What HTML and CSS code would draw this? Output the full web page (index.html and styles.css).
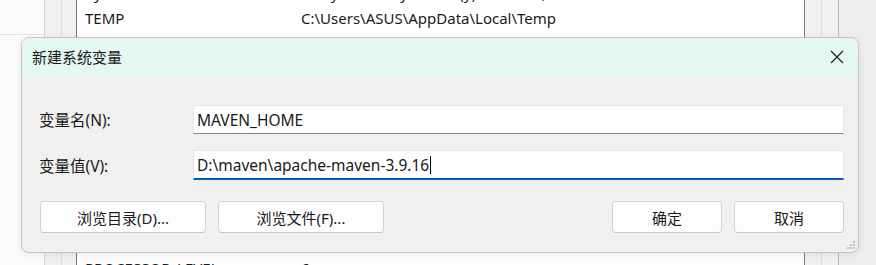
FILE: index.html
```html
<!DOCTYPE html>
<html lang="zh-CN">

<head>
    <meta charset="UTF-8">
    <title>新建系统变量</title>
    <link rel="stylesheet" href="styles.css">
</head>

<body>

    <!-- 背景: 环境变量窗口 -->
    <div class="desk">
        <div class="side">
            <div class="side-top"></div>
        </div>
        <div class="gutter"></div>
        <div class="gutter gutter-b"></div>
        <div class="list">
            <div class="row first"><span class="name">PyCharm</span><span class="value">D:\PyCharm\PyCharm (y) 2023\bin;</span></div>
            <div class="row"><span class="name">TEMP</span><span class="value">C:\Users\ASUS\AppData\Local\Temp</span></div>
            <div class="row"><span class="name">TMP</span><span class="value">C:\Users\ASUS\AppData\Local\Temp</span></div>
            <div class="row"><span class="name"></span><span class="value"></span></div>
            <div class="row"><span class="name"></span><span class="value"></span></div>
            <div class="row"><span class="name"></span><span class="value"></span></div>
            <div class="row"><span class="name"></span><span class="value"></span></div>
            <div class="row"><span class="name"></span><span class="value"></span></div>
            <div class="row"><span class="name"></span><span class="value"></span></div>
            <div class="row"><span class="name"></span><span class="value"></span></div>
            <div class="row"><span class="name">NUMBER_OF_PROCESSORS</span><span class="value">12</span></div>
            <div class="row"><span class="name">PROCESSOR_LEVEL</span><span class="value">6</span></div>
        </div>
        <div class="rail"></div>
        <div class="rail rail-b"></div>
        <div class="rail-end"></div>
    </div>

    <!-- 对话框 -->
    <div class="dialog">
        <div class="titlebar">
            <span class="title">新建系统变量</span>
            <svg class="close" width="14" height="14" viewBox="0 0 14 14">
                <path d="M1 1 L13 13 M13 1 L1 13" stroke="#1a1a1a" stroke-width="1.1" fill="none" />
            </svg>
        </div>

        <div class="body">
            <div class="fields">
                <label for="var-name">变量名(N):</label>
                <div class="input"><span id="var-name">MAVEN_HOME</span></div>

                <label for="var-value">变量值(V):</label>
                <div class="input focused"><span id="var-value">D:\maven\apache-maven-3.9.16</span><span class="caret"></span></div>
            </div>

            <div class="buttons">
                <button>浏览目录(D)...</button>
                <button>浏览文件(F)...</button>
                <div class="spacer"></div>
                <button class="small">确定</button>
                <button class="small">取消</button>
            </div>
        </div>

        <svg class="grip" width="9" height="9" viewBox="0 0 9 9">
            <rect x="7" y="1" width="2" height="2" fill="#c2c2c2" />
            <rect x="4" y="4" width="2" height="2" fill="#c2c2c2" />
            <rect x="7" y="4" width="2" height="2" fill="#c2c2c2" />
            <rect x="1" y="7" width="2" height="2" fill="#c2c2c2" />
            <rect x="4" y="7" width="2" height="2" fill="#c2c2c2" />
            <rect x="7" y="7" width="2" height="2" fill="#c2c2c2" />
        </svg>
    </div>

</body>

</html>
```

FILE: styles.css
```css
body {
    margin: 0;
    width: 876px;
    height: 265px;
    overflow: hidden;
    position: relative;
    font-family: "Noto Sans", "Noto Sans CJK SC", sans-serif;
    font-size: 15px;
    color: #1a1a1a;
    background-color: #f0f0f0;
}

/* 背景窗口 */
.desk {
    display: flex;
    height: 265px;
}

.side {
    width: 44px;
    background-color: #fbfbfb;
    border-right: 1px solid #d6d6d6;
}

.side-top {
    height: 34px;
    border-bottom: 1px solid #e3e3e3;
}

.gutter {
    width: 16px;
    background-color: #f0f0f0;
    border-right: 1px solid #dcdcdc;
}

.gutter-b {
    width: 14px;
    border-right: 1px solid #7a7a7a;
}

.list {
    width: 727px;
    background-color: white;
    overflow: hidden;
}

.row {
    display: flex;
    height: 25px;
    line-height: 25px;
    padding-left: 8px;
    white-space: nowrap;
}

.row.first {
    margin-top: -19.3px;
}

.row .name {
    width: 216px;
}

.rail {
    width: 16px;
    background-color: #f0f0f0;
    border-left: 1px solid #7a7a7a;
}

.rail-b {
    border-left: 1px solid #dcdcdc;
}

.rail-end {
    flex: 1;
    background-color: #eeeef1;
    border-left: 1px solid #b9b9b9;
}

/* 对话框 */
.dialog {
    position: absolute;
    left: 21px;
    top: 37px;
    width: 836px;
    height: 214px;
    border: 1px solid #c4c4c4;
    border-radius: 8px;
    background-color: #f0f0f0;
    overflow: hidden;
    box-shadow: 0 2px 8px rgba(0, 0, 0, 0.08);
}

.titlebar {
    height: 37px;
    background-color: #e5f7f3;
    display: flex;
    align-items: center;
    justify-content: space-between;
    padding: 0 14px 0 10px;
}

.body {
    padding: 30px 14px 0 17px;
}

.fields {
    display: grid;
    grid-template-columns: 154px 651px;
    row-gap: 16px;
    align-items: center;
}

.fields label {
    font-size: 15.5px;
}

.input {
    height: 27px;
    background-color: white;
    border: 1px solid #e6e6e6;
    border-bottom: 1px solid #868686;
    display: flex;
    align-items: center;
    padding-left: 3px;
    white-space: nowrap;
    font-size: 15.5px;
}

.input.focused {
    border-bottom: 2px solid #005fb8;
}

.caret {
    display: inline-block;
    width: 1px;
    height: 18px;
    margin-left: 1px;
    background-color: #000;
}

.buttons {
    display: flex;
    gap: 12px;
    margin-top: 21px;
    margin-left: 1px;
}

.buttons .spacer {
    flex: 1;
}

.buttons button {
    width: 166px;
    height: 32px;
    font-family: inherit;
    font-size: 15px;
    color: #1a1a1a;
    background-color: #fdfdfd;
    border: 1px solid #d4d4d4;
    border-bottom-color: #c6c6c6;
    border-radius: 4px;
    padding: 0;
}

.buttons button.small {
    width: 110px;
}

.grip {
    position: absolute;
    right: 3px;
    bottom: 3px;
}
```
